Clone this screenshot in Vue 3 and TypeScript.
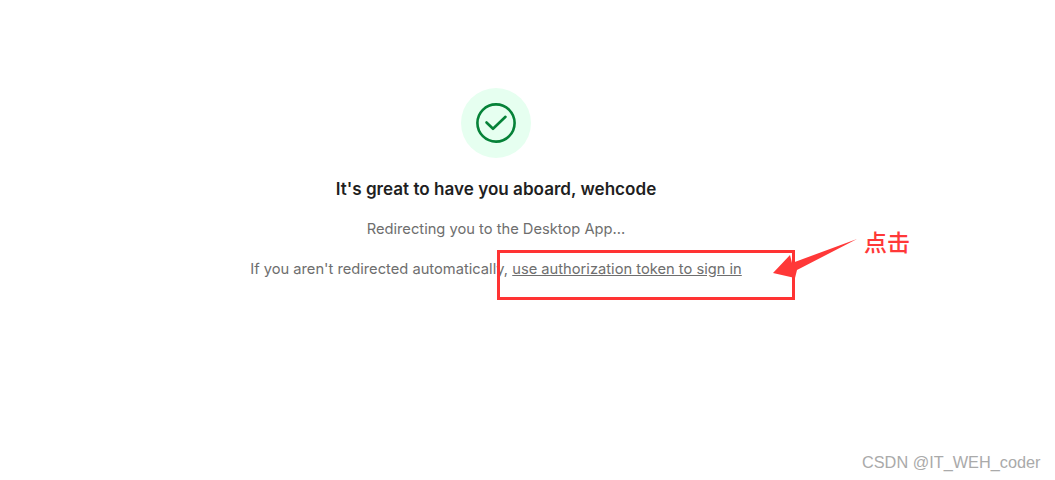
<template>
	<div class="page">
		<main class="content">
			<div class="badge">
				<svg width="40" height="40" viewBox="0 0 40 40" fill="none">
					<circle cx="20" cy="20" r="18.6" stroke="#068238" stroke-width="2.6" />
					<path d="M10.5 19.5 L17 25.8 L29.5 13.8" stroke="#068238" stroke-width="2.6" stroke-linecap="round" stroke-linejoin="round" />
				</svg>
			</div>
			<h1>{{ title }}</h1>
			<p class="redirecting">Redirecting you to the Desktop App...</p>
			<p class="fallback">
				If you aren't redirected automatically,
				<a href="#" @click.prevent>use authorization token to sign in</a>
			</p>
		</main>

		<div class="mark-box"></div>
		<svg class="mark-arrow" width="90" height="45" viewBox="0 0 90 45">
			<polygon points="0,34 17,16 19,24 84,0 24,31 22,39" fill="#ff3838" />
		</svg>
		<span class="mark-label">点击</span>
		<span class="watermark">CSDN @IT_WEH_coder</span>
	</div>
</template>

<script setup lang="ts">
const title = "It's great to have you aboard, wehcode"
</script>

<style>
html, body { background: #fff; }
</style>

<style scoped>
.page {
	position: relative;
	width: 1055px;
	height: 480px;
	overflow: hidden;
	background: #fff;
	font-family: Inter, "Noto Sans", sans-serif;
}
.content {
	width: 992px;
	padding-top: 88px;
	display: flex;
	flex-direction: column;
	align-items: center;
	text-align: center;
}
.badge {
	width: 70px;
	height: 70px;
	border-radius: 50%;
	background: #e6fff0;
	display: flex;
	align-items: center;
	justify-content: center;
}
h1 {
	margin: 20px 0 0;
	font-size: 17.1px;
	line-height: 22px;
	font-weight: 600;
	color: #1f1f1f;
}
.redirecting, .fallback {
	margin: 0;
	font-size: 14.7px;
	line-height: 20px;
	color: #6e6e6e;
}
.redirecting { margin-top: 19px; }
.fallback { margin-top: 20px; }
.fallback a { color: #6e6e6e; text-decoration: underline; }

/* annotations drawn over the screenshot */
.mark-box {
	position: absolute;
	left: 497px;
	top: 250px;
	width: 298px;
	height: 50px;
	box-sizing: border-box;
	border: 3px solid #ff3333;
}
.mark-arrow {
	position: absolute;
	left: 773px;
	top: 239px;
}
.mark-label {
	position: absolute;
	left: 864px;
	top: 226px;
	font-family: "Noto Sans CJK SC", sans-serif;
	font-size: 23px;
	line-height: 30px;
	font-weight: 500;
	color: #ff3838;
}
.watermark {
	position: absolute;
	left: 862px;
	top: 453px;
	font-family: "Liberation Sans", sans-serif;
	font-size: 16.3px;
	line-height: 18px;
	color: #aaaaaa;
}
</style>
